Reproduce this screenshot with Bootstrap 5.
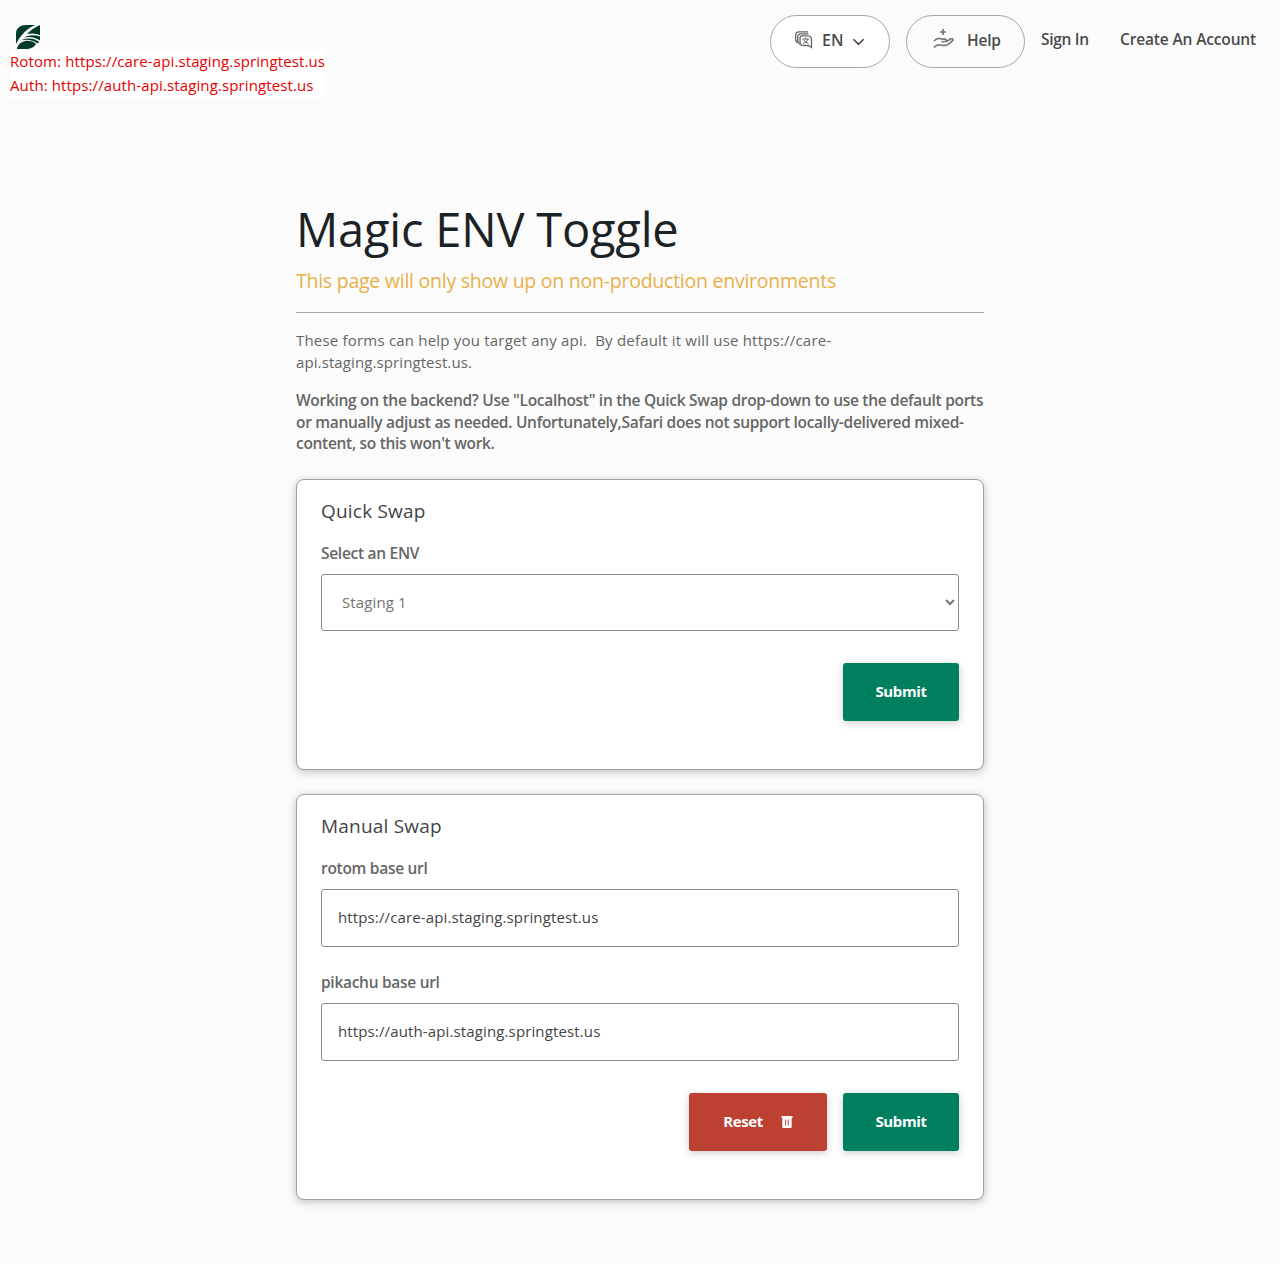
<!DOCTYPE html>
<html lang="en">
<head>
<meta charset="utf-8">
<meta name="viewport" content="width=device-width, initial-scale=1">
<title>Magic ENV Toggle</title>
<link href="https://cdn.jsdelivr.net/npm/bootstrap@5.3.0/dist/css/bootstrap.min.css" rel="stylesheet">
<style>
body{background:#fbfbfb;color:#666;font-family:"Open Sans","Noto Sans",sans-serif;font-size:15px;line-height:24px}
.site-head{height:98px}
.brand-col{padding:25px 0 0 10px}
.brand-col svg{display:block;margin:0 0 1px 6px}
.env-note{background:#fff;color:#e60000;width:315px;height:48px;white-space:nowrap;letter-spacing:.115px;line-height:24px}
.env-note span{display:block;height:24px;line-height:22px}
.menu-col{padding:15px 24px 0 0;color:#4b4b4b}
.pill{height:53px;border:1px solid #a6a6a6;border-radius:27px;color:#4b4b4b}
.pill-lang{width:120px}
.pill-help{width:119px}
.pill span{padding-bottom:4px}
.pill .lang-code{margin:0 9px;letter-spacing:0;font-size:16px}
.pill .help-word{margin-left:13px;padding-bottom:3px;letter-spacing:-.2px}
.pill-help svg{margin:0 0 5px 26px}
.strong-text{font-weight:600;font-size:15.500px;letter-spacing:-.29px;white-space:nowrap}
.nav-word{color:#4b4b4b;text-decoration:none;height:50px;line-height:48px}
.nav-signin{width:79px}
.nav-create{width:136px;letter-spacing:-.15px}
.page-main{width:688px;margin:0 auto;padding:101px 0 64px}
.page-title{font-size:47px;letter-spacing:-.2px;line-height:60px;color:#1b2226;font-weight:400;margin:0;height:67px;white-space:nowrap}
.warn-line{font-size:19.500px;letter-spacing:-.25px;line-height:30px;color:#e9b04a;margin:0;height:46px;white-space:nowrap}
.rule{border-top:1px solid #a6a6a6;height:18px}
.copy{line-height:21.6px;margin:0 0 17px;white-space:nowrap;letter-spacing:.2px}
.copy span{display:table}
.copy .tail{letter-spacing:.1px}
.copy.strong-text{letter-spacing:-.3px}
.panel{background:#fff;border:1px solid #a0a0a0;border-radius:8px;box-shadow:0 2px 8px rgba(0,0,0,.24);padding:16px 24px 0}
.panel-a{height:291px;margin:24px 0}
.panel-b{height:406px}
.panel h2{font-size:19px;letter-spacing:.2px;line-height:30px;font-weight:400;color:#444;margin:0 0 15px}
.field-label{display:block;line-height:24px;margin-bottom:9px;width:max-content}
.second-label{margin-top:23px}
.panel .field{height:58px;border:1px solid #8c8c8c;border-radius:3px;padding:0 16px 2px;font-size:15px;letter-spacing:.13px;color:#444;box-shadow:none}
.panel select.field{height:57px;width:100%;display:block;background:#fff;color:#757575;padding:0 0 0 16px}
.action{height:58px;border:0;border-radius:3px;color:#fff;box-shadow:0 2px 8px rgba(0,0,0,.2);padding:0 0 2px}
.action.strong-text{font-weight:700;font-size:15px;letter-spacing:-.4px}
.action svg{margin-left:18px}
.go{background:#007f5f;width:116px}
.wipe{background:#bc4133;width:138px}
</style>
</head>
<body>
<header class="site-head d-flex justify-content-between">
  <div class="brand-col">
    <svg width="24" height="24" viewBox="0 0 24 24"><path fill="#003b2d" d="M0 19V8Q1 0 10 0H19Q7 5 0 19ZM24 0V10Q18 7.500 11 9Q16 3.500 24 0ZM24 11.500V15.500Q17 10.500 8 12.500Q15 8.500 24 11.500ZM1 23Q3 17 10 15.800Q17 15.500 20 19Q18 23 12 24H1ZM8 14Q17 12.200 23.300 17L21.500 18.500Q16 13.800 6 15Z"/></svg>
    <div class="env-note"><span>Rotom: https://care-api.staging.springtest.us</span><span>Auth: https://auth-api.staging.springtest.us</span></div>
  </div>
  <nav class="menu-col d-flex align-items-start">
    <button class="pill pill-lang bg-white d-flex align-items-center p-0">
      <svg class="ms-4 mb-1" width="18" height="18" viewBox="0 0 18 18" fill="none" stroke="#666" stroke-width="1.300"><path d="M3 11.500Q.7 11 .7 8.500V4Q.7 1 4 .8H13M5 13.500Q2.700 12.500 2.700 10V6Q2.700 2.800 6 2.800H13.500"/><path d="M7 4.800H13Q16.500 5 16.500 9V16.500L13.500 14.500H8.500Q5 14.500 5 11.500V7Q5 4.800 7 4.800Z"/><path stroke-width="1" d="M7.500 8H14M10.700 6.500V8M8 12.500Q12 11.500 13 8M8.500 8.500Q10.500 12 13.500 12.500"/></svg>
      <span class="strong-text lang-code">EN</span>
      <svg width="13" height="8" viewBox="0 0 14 8" fill="none" stroke="#463232" stroke-width="1.400"><path d="M1.500 1L7 6.500L12.500 1"/></svg>
    </button>
    <button class="pill pill-help bg-transparent d-flex align-items-center p-0 ms-3">
      <svg width="21" height="21" viewBox="0 0 21 21" fill="none" stroke="#777" stroke-width="1.700"><path d="M10 0V6M7 3H13"/><path d="M1 12Q4 8.700 8 9.700Q9 10.200 11.500 10.200Q14 10.500 13 12Q12 13 8.500 12.700M13 12.700L17.500 10Q20 9 20 11Q18 14 14 16Q11 17 7.500 16Q3.500 15.500 1 18.500"/></svg>
      <span class="strong-text help-word">Help</span>
    </button>
    <a class="nav-word nav-signin strong-text ms-3" href="#">Sign In</a>
    <a class="nav-word nav-create strong-text" href="#">Create An Account</a>
  </nav>
</header>
<main class="page-main">
  <h1 class="page-title">Magic ENV Toggle</h1>
  <p class="warn-line">This page will only show up on non-production environments</p>
  <div class="rule"></div>
  <p class="copy"><span>These forms can help you target any api.&nbsp; By default it will use https://care-</span><span class="tail">api.staging.springtest.us.</span></p>
  <p class="copy strong-text"><span>Working on the backend? Use "Localhost" in the Quick Swap drop-down to use the default ports</span><span>or manually adjust as needed. Unfortunately,Safari does not support locally-delivered mixed-</span><span>content, so this won't work.</span></p>
  <section class="panel panel-a">
    <h2>Quick Swap</h2>
    <label class="field-label strong-text" for="env">Select an ENV</label>
    <select id="env" class="field"><option>Staging 1</option></select>
    <div class="d-flex justify-content-end mt-4 pt-2"><button class="action go strong-text">Submit</button></div>
  </section>
  <section class="panel panel-b">
    <h2>Manual Swap</h2>
    <label class="field-label strong-text" for="rotom">rotom base url</label>
    <input id="rotom" class="field form-control" value="https://care-api.staging.springtest.us">
    <label class="field-label second-label strong-text" for="pika">pikachu base url</label>
    <input id="pika" class="field form-control" value="https://auth-api.staging.springtest.us">
    <div class="d-flex justify-content-end gap-3 mt-4 pt-2">
      <button class="action wipe strong-text">Reset<svg width="12" height="13" viewBox="0 0 12 13"><path fill="#fff" fill-rule="evenodd" d="M.5 0H11.500V2H.5ZM1.300 2H10.700V11Q10.700 12 9.700 12H2.300Q1.300 12 1.300 11ZM4.200 3.500V9.500H5.200V3.500ZM6.800 3.500V9.500H7.800V3.500Z"/></svg></button>
      <button class="action go strong-text">Submit</button>
    </div>
  </section>
</main>
<script src="https://cdn.jsdelivr.net/npm/bootstrap@5.3.0/dist/js/bootstrap.bundle.min.js"></script>
</body>
</html>
